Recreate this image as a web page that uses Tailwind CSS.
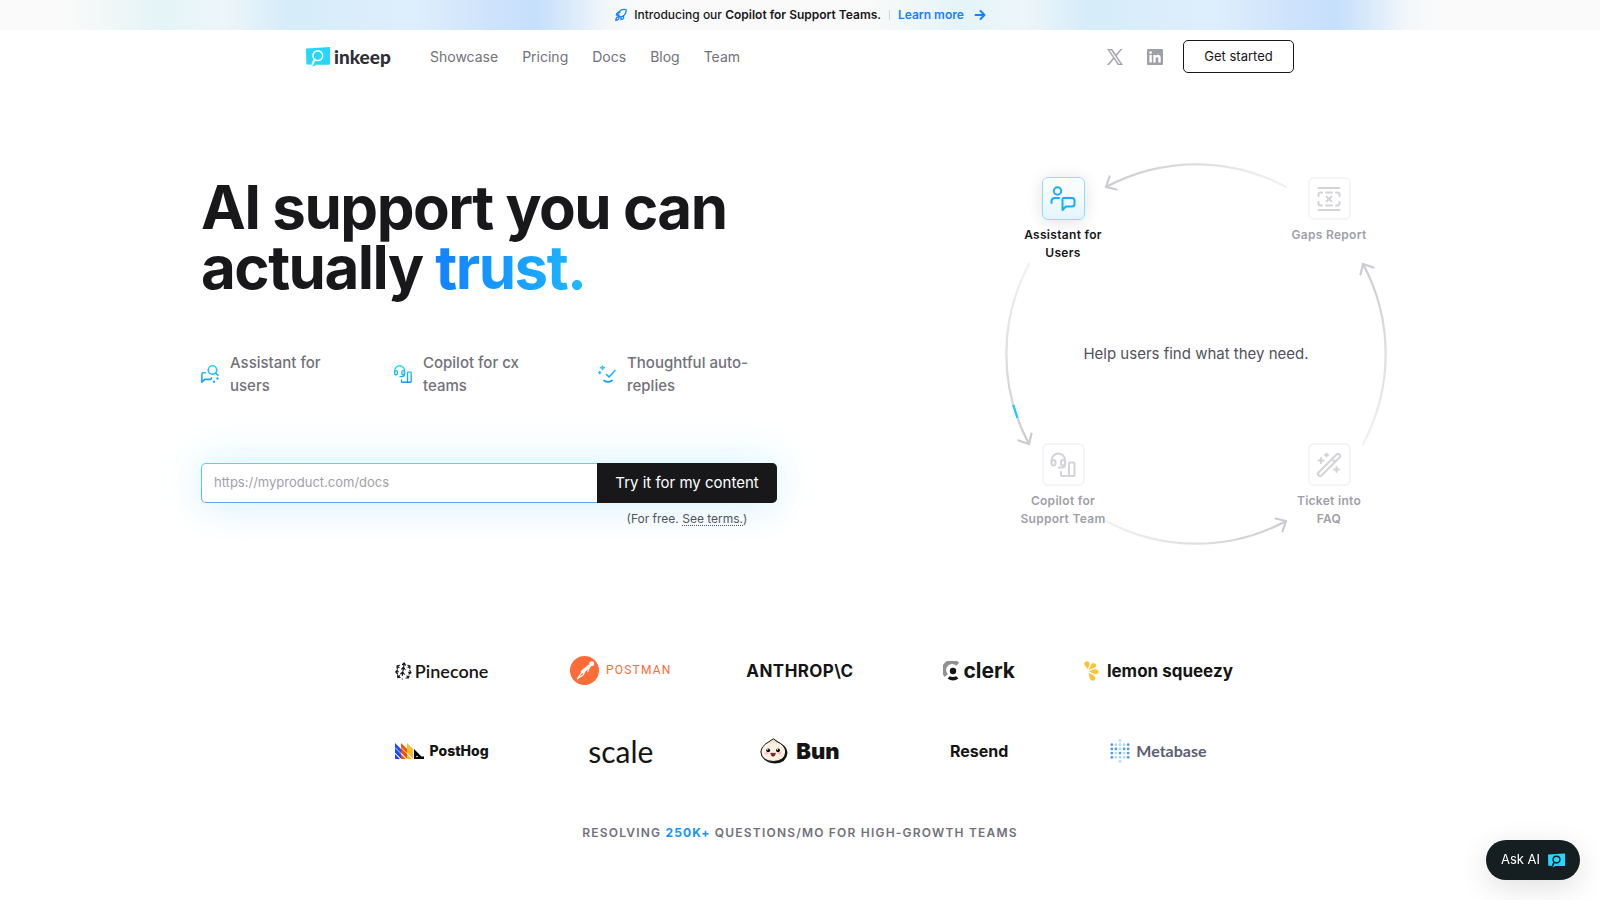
<!DOCTYPE html>
<html lang="en">
<head>
<meta charset="utf-8">
<meta name="viewport" content="width=device-width, initial-scale=1">
<title>Inkeep – AI support you can actually trust</title>
<script src="https://cdn.jsdelivr.net/npm/@tailwindcss/browser@4"></script>
</head>
<body class="min-h-screen bg-white font-['Inter',sans-serif] text-[#18181b] antialiased">

<!-- Announcement -->
<div class="flex h-[30px] items-center justify-center bg-[#fafafa] bg-[linear-gradient(90deg,#fafafa_0%,#fafafa_8%,#f0f7f7_14%,#e4f4f8_20%,#edf6f9_28%,#d6ecf9_36%,#d9edfa_42%,#deeefc_52%,#d0e4fb_60%,#c5dffc_67%,#d9e9fb_71%,#f3f7fb_76%,#fafafa_80%,#fafafa_100%)] bg-[length:50%_100%] text-xs leading-5">
  <svg class="mr-1.5 size-[14px] text-[#1481ff]" viewBox="0 0 24 24" fill="none" stroke="currentColor" stroke-width="2.200" stroke-linecap="round" stroke-linejoin="round" aria-hidden="true"><path d="M9 15l-3-3c.6-2 1.400-3.900 2.500-5.600A13 13 0 0 1 21 3c0 3-1 8-6 11.500A24 24 0 0 1 9 15z"/><path d="M9 12H4s.5-3 2-4c1.600-1.100 4 0 4 0M12 15v5s3-.5 4-2c1.100-1.600 0-5 0-5M5 16c-1.500 1.300-2 5-2 5s3.700-.5 5-2c.7-.8.7-2.100-.1-2.900A2.200 2.200 0 0 0 5 16z"/></svg>
  <p class="font-medium">Introducing our <strong class="font-semibold">Copilot for Support Teams</strong>.</p>
  <span class="mx-2 h-2.5 w-px bg-zinc-300"></span>
  <a href="#" class="flex items-center gap-2.5 font-semibold text-[#1481ff]">Learn more
    <svg class="size-3" viewBox="0 0 12 12" fill="none" stroke="currentColor" stroke-width="2" stroke-linecap="round" stroke-linejoin="round" aria-hidden="true"><path d="M1.500 6h9M6.500 2L10.500 6l-4 4"/></svg>
  </a>
</div>

<!-- Header -->
<header class="mx-auto flex max-w-[1024px] items-center px-[18px] py-2.5">
  <a href="#" class="flex w-[84px] items-center gap-1" aria-label="inkeep">
    <svg class="h-5 w-6 shrink-0" viewBox="0 0 24 20" aria-hidden="true"><path d="M.5 1.500L23.500 0Q24 0 24 .5V17q0 .7-.7.700H10.500L6.500 20l.5-2.300L1 17.500Q.5 17.500.4 17L0 2Q0 1.500.5 1.500z" fill="#26d6ff"/><circle cx="11.800" cy="8.700" r="4.800" fill="none" stroke="#fff" stroke-width="1.600"/><path d="M8.500 12.500l-1.800 4.500" stroke="#fff" stroke-width="2.200" stroke-linecap="round"/></svg>
    <span class="font-['Lato',sans-serif] text-[19px] leading-6 font-black text-[#2f2f33]">inkeep</span>
  </a>
  <nav class="ml-10 flex items-center gap-6 text-sm leading-6 text-zinc-500">
    <a href="#">Showcase</a><a href="#">Pricing</a><a href="#">Docs</a><a href="#">Blog</a><a href="#">Team</a>
  </nav>
  <div class="ml-auto flex items-center gap-6 text-zinc-400">
    <a href="#" aria-label="X"><svg class="size-4" viewBox="0 0 24 24" fill="currentColor" stroke="currentColor" stroke-width=".7"><path d="M14.200 10.200L22.700 0h-2l-7.400 8.800L7.400 0H.6l8.900 13.300L.6 24h2l7.800-9.300L16.600 24h6.800zM11.400 13.500l-.9-1.300L3.300 1.600h3.100l5.800 8.500.9 1.300 7.600 11.100h-3.100z"/></svg></a>
    <a href="#" aria-label="LinkedIn"><svg class="size-4" viewBox="0 0 16 16" fill="currentColor"><path fill-rule="evenodd" d="M1 0h14a1 1 0 0 1 1 1v14a1 1 0 0 1-1 1H1a1 1 0 0 1-1-1V1a1 1 0 0 1 1-1zM2.400 6v7.600h2.400V6zM3.600 2.200a1.400 1.400 0 1 0 0 2.800 1.400 1.400 0 0 0 0-2.800zM6.300 6v7.600h2.400V9.800c0-1 .4-1.800 1.400-1.800s1.200.8 1.200 1.900v3.700h2.400V9.300c0-2-.6-3.500-2.900-3.500-1.100 0-1.800.6-2.200 1.200V6z"/></svg></a>
  </div>
  <button class="ml-5 h-[33px] w-[111px] rounded-[5px] border border-zinc-900 text-[13px] leading-none text-zinc-900">Get started</button>
</header>

<main>
<!-- Hero -->
<section class="mx-auto flex max-w-[1200px] items-center justify-between gap-10 px-px pt-[68px]">
  <div class="w-[576px]">
    <h1 class="text-[60px] leading-[60px] font-bold tracking-tight">AI support you can<br>actually <span class="bg-gradient-to-r from-[#1481ff] to-[#22b8ff] bg-clip-text text-transparent">trust.</span></h1>

    <ul class="mt-[54px] grid grid-cols-[193px_204px_1fr] text-[15px] leading-[23px] font-medium text-zinc-500">
      <li class="flex items-center gap-[11px]">
        <svg class="size-[18px] shrink-0" viewBox="0 0 18 18" fill="none" stroke="url(#cyan)" stroke-width="1.600" stroke-linecap="round" stroke-linejoin="round" aria-hidden="true"><defs><linearGradient id="cyan" gradientUnits="userSpaceOnUse" x1="0" y1="0" x2="0" y2="18"><stop stop-color="#26d6ff"/><stop offset="1" stop-color="#1498ff"/></linearGradient></defs><circle cx="11.500" cy="5" r="4.200"/><path d="M14.500 8l2.500 2.300M4.500 7.800H2Q.9 7.800.9 9v8.200l2.800-2.800H9q1.500 0 1.500-1.500"/><path d="M13 16.200v1M16.500 13v1M16 13.500h1M12.500 16.700h1"/></svg>
        <span class="max-w-[125px]">Assistant for users</span></li>
      <li class="flex items-center gap-[11px]">
        <svg class="size-[18px] shrink-0" viewBox="0 0 24 24" fill="none" stroke="url(#cyan2)" stroke-width="1.800" stroke-linecap="round" stroke-linejoin="round" aria-hidden="true"><defs><linearGradient id="cyan2" gradientUnits="userSpaceOnUse" x1="0" y1="0" x2="0" y2="24"><stop stop-color="#26d6ff"/><stop offset="1" stop-color="#1498ff"/></linearGradient></defs><path d="M1 9V7.500a6.500 6.500 0 0 1 13 0V12q0 3-3 3.500H8"/><rect x="1" y="7.500" width="3.500" height="5.500" rx="1.500"/><rect x="10.500" y="7.500" width="3.500" height="5.500" rx="1.500"/><path d="M18 22V10.500q0-1 1-1h3q1 0 1 1V22q0 1-1 1H11q-1 0-1-1v-2"/></svg>
        <span class="max-w-[125px]">Copilot for cx teams</span></li>
      <li class="flex items-center gap-[11px]">
        <svg class="size-[18px] shrink-0" viewBox="0 0 18 18" fill="none" stroke="url(#cyan3)" stroke-width="1.700" stroke-linecap="round" stroke-linejoin="round" aria-hidden="true"><defs><linearGradient id="cyan3" gradientUnits="userSpaceOnUse" x1="0" y1="0" x2="0" y2="18"><stop stop-color="#26d6ff"/><stop offset="1" stop-color="#1498ff"/></linearGradient></defs><path d="M4.500 1v3.500M2.800 2.700h3.500M1.700 6.700v1.600M.9 7.500h1.600M8.500 9.500l2.500 2.500 6-6.500M6 15.500q4 2.800 8 0"/></svg>
        <span class="max-w-[125px]">Thoughtful auto-replies</span></li>
    </ul>

    <form class="mt-[66px] pb-[3px]">
      <div class="flex h-10 rounded-[5px] bg-gradient-to-b from-[#4fd8f8] to-[#5aa9fb] shadow-[0_-4px_44px_rgba(38,214,255,0.15),0_8px_36px_rgba(20,129,255,0.07)]">
        <input type="url" aria-label="Documentation URL" placeholder="https://myproduct.com/docs" class="my-px ml-px min-w-0 flex-1 rounded-l-[4px] bg-white px-3 text-[13px] outline-none placeholder:text-zinc-400">
        <button type="button" class="w-[180px] rounded-r-[5px] bg-[#18181b] text-[15px] leading-none whitespace-nowrap text-white">Try it for my content</button>
      </div>
      <p class="mt-1.5 ml-auto w-[180px] text-center text-xs leading-5 text-zinc-600">(For free. <a href="#" class="underline decoration-dotted underline-offset-2">See terms.</a>)</p>
    </form>
  </div>

  <!-- Feedback loop -->
  <div class="relative size-[406px] shrink-0">
    <svg class="absolute inset-0 size-full" viewBox="-203 -203 406 406" fill="none" stroke-width="2.200" stroke-linecap="round" stroke-linejoin="round" aria-hidden="true">
      <defs>
        <linearGradient id="fade" gradientUnits="userSpaceOnUse" x1="90" y1="0" x2="-90" y2="0"><stop stop-color="#f1f1f3"/><stop offset="1" stop-color="#cbcbd0"/></linearGradient>
        <g id="arc"><path d="M90 -167A190 190 0 0 0 -90 -167" stroke="url(#fade)"/><path d="M-86.500 -177.500L-90 -167L-79.500 -164.500" stroke="#cbcbd0"/></g>
      </defs>
      <use href="#arc"/>
      <use href="#arc" transform="rotate(-90)"/>
      <use href="#arc" transform="rotate(180)"/>
      <use href="#arc" transform="rotate(90)"/>
      <path d="M-182.800 51L-178.500 64" stroke="#12d0ff" stroke-linecap="butt"/>
    </svg>
    <p class="absolute inset-x-0 top-[191px] text-center text-[15px] leading-6 text-zinc-600">Help users find what they need.</p>

    <div class="absolute top-[26px] left-[20px] flex w-[100px] flex-col items-center gap-1.5 text-center text-xs leading-[18px] font-semibold tracking-wide text-zinc-900">
      <span class="flex size-[43px] items-center justify-center rounded-md border border-[#8fdcff] bg-gradient-to-b from-white to-[#e3f5ff] text-[#16adff] shadow-[0_2px_16px_rgba(0,0,0,0.12)]">
        <svg class="size-[26px]" viewBox="0 0 26 26" fill="none" stroke="currentColor" stroke-width="2" stroke-linecap="round" stroke-linejoin="round" aria-hidden="true"><circle cx="7.500" cy="5" r="3.700"/><path d="M1.500 17v-1.500q0-3.500 3.500-3.500h4M12.500 24V13q0-1 1-1H22q2.500 0 2.500 2.500V18q0 2.500-2.500 2.500h-6z"/></svg>
      </span>Assistant for Users
    </div>
    <div class="absolute top-[26px] right-[20px] flex w-[100px] flex-col items-center gap-1.5 text-center text-xs leading-[18px] font-semibold tracking-wide text-zinc-400">
      <span class="flex size-[43px] items-center justify-center rounded-md border-2 border-zinc-100 text-zinc-300">
        <svg class="size-[26px]" viewBox="0 0 26 26" fill="none" stroke="currentColor" stroke-width="2" stroke-linecap="round" stroke-linejoin="round" aria-hidden="true"><path d="M2.500 2h21M2.500 24h21M2.500 10V8.500q0-2 2-2H6M10 6.500h6M20 6.500h1.500q2 0 2 2V10M2.500 16v1.500q0 2 2 2H6M10 19.500h6M20 19.500h1.500q2 0 2-2V16M10.700 10.700l4.600 4.600M15.300 10.700l-4.600 4.600"/></svg>
      </span>Gaps Report
    </div>
    <div class="absolute top-[292px] left-[20px] flex w-[100px] flex-col items-center gap-1.5 text-center text-xs leading-[18px] font-semibold tracking-wide text-zinc-400">
      <span class="flex size-[43px] items-center justify-center rounded-md border-2 border-zinc-100 text-zinc-300">
        <svg class="size-[26px]" viewBox="0 0 26 26" fill="none" stroke="currentColor" stroke-width="2" stroke-linecap="round" stroke-linejoin="round" aria-hidden="true"><path d="M1.500 9.500V8.300a6.800 6.800 0 0 1 13.600 0V12q0 3.500-3.200 3.500H8.500"/><rect x="1.500" y="8" width="4" height="5.500" rx="2"/><rect x="11" y="8" width="4" height="5.500" rx="2"/><path d="M19 24V11.500q0-1 1-1h3.500q1 0 1 1V23q0 1-1 1H12q-1 0-1-1v-3"/></svg>
      </span>Copilot for Support Team
    </div>
    <div class="absolute top-[292px] right-[20px] flex w-[100px] flex-col items-center gap-1.5 px-2.5 text-center text-xs leading-[18px] font-semibold tracking-wide text-zinc-400">
      <span class="flex size-[43px] items-center justify-center rounded-md border-2 border-zinc-100 text-zinc-300">
        <svg class="size-[26px]" viewBox="0 0 26 26" fill="none" stroke="currentColor" stroke-width="2" stroke-linecap="round" stroke-linejoin="round" aria-hidden="true"><path d="M2.200 20.800L20.800 2.200q1-1 2 0l1 1q1 1 0 2L5.200 23.800q-1 1-2 0l-1-1q-1-1 0-2zM16 7l3 3M5 6v5M2.500 8.500h5M10.500 1.500v3M9 3h3M20.500 15v5M18 17.500h5"/></svg>
      </span>Ticket into FAQ
    </div>
  </div>
</section>

<!-- Customers -->
<section class="mx-auto mt-[93px] grid max-w-[896px] auto-rows-[40px] grid-cols-5 place-items-center gap-y-[41px] whitespace-nowrap text-[#151515]">
  <div class="flex items-center gap-[3px] pt-0.5 font-['Lato',sans-serif] text-[18px] leading-7 font-semibold">
    <svg class="h-[18px] w-[17px]" viewBox="0 0 34 36" fill="none" stroke="currentColor" stroke-width="2.400" stroke-linecap="round" stroke-linejoin="round" aria-hidden="true"><path d="M17.500 9L18.500 2M15 5l3.500-3L21 6M16 18l1-7M13.500 14l3.500-3.500 3 4.500M14.500 27l1-6M11.500 23.500l4-3.500 3 4.500M8 11L4 8M9 6.500L4 8l.5 5M26 11l4-3M25.500 6.500L30 8l-.5 5M7 19.500L1.500 20M5 16l-3.500 4L5 23.500M27 20.500l5 1M29.500 17l2.500 4.500-4 2.500M9 27.500L5.500 31M5.500 26v5h4.500M24 28l2.500 4M28 28l-1.500 4H22M14.500 34v.1"/></svg>Pinecone</div>
  <div class="flex items-center gap-[7px] font-['Roboto',sans-serif] text-xs tracking-widest text-[#ff6c37]">
    <svg class="size-[29px]" viewBox="0 0 28 28" aria-hidden="true"><circle cx="14" cy="14" r="14" fill="#ff6c37"/><g fill="none" stroke="#fff" stroke-linecap="round"><circle cx="21" cy="7.500" r="1.900" fill="#fff"/><path d="M18.500 9.800L12 15.300" stroke-width="3.200"/><path d="M12 15l-4.700 6.500M14 15l-1 3-5.700 4" stroke-width="1.200"/><path d="M18.800 11l-1.800 4.500" stroke-width="1"/></g></svg>POSTMAN</div>
  <div class="pt-0.5 text-[17px] leading-7 font-bold tracking-wide">ANTHROP\C</div>
  <div class="flex items-center gap-1 pt-0.5 text-[21px] leading-7 font-bold">
    <svg class="h-5 w-4" viewBox="0 0 16 20" aria-hidden="true"><path d="M14.700 3.200A7.800 7.800 0 0 0 3.300 14.500" fill="none" stroke="#919191" stroke-width="4.200"/><circle cx="10" cy="10" r="3.200" fill="currentColor"/><path d="M4.500 17.500l2.300-2.300q3.200 1.500 6.400 0l2.300 2.300q-5.500 4-11 0z" fill="currentColor"/></svg>clerk</div>
  <div class="flex items-center gap-2 pt-0.5 text-[17px] leading-7 font-bold">
    <svg class="h-5 w-[15px]" viewBox="0 0 15 20" fill="#ffc233" aria-hidden="true"><path d="M4 8.500L.5 4Q-.5 1 2.300.2 5.300-.2 5.500 2.500z"/><path d="M4.800 9L7 3.800Q8.500 1 11.300 2.700 13.300 5 10.500 6.600z"/><path d="M5 10.500L10 8.300Q14 7.500 14.500 10.800 14.300 14 10.500 13z"/><path d="M4.500 11.800L9.800 14.500Q12.500 17 10.700 19 8 21 5.800 17.500z"/></svg>lemon squeezy</div>

  <div class="flex items-center gap-1.5 text-[14px] leading-7 font-extrabold">
    <svg class="h-4 w-[29px]" viewBox="0 0 29 16" aria-hidden="true"><path d="M0 0l6 6v10L0 10z" fill="#1d4aff"/><path d="M0 11l5 5H0z" fill="#1d4aff"/><path d="M6 0l6 6v10L6 10z" fill="#f54e00"/><path d="M6 11l5 5H6z" fill="#f54e00"/><path d="M12 0l6 6v10l-6-6z" fill="#f9bd2b"/><path d="M12 11l5 5h-5z" fill="#f9bd2b"/><path d="M0 4.500l11.500 11.500M6 4.500l11.500 11.500M0 10l6 6" stroke="#fff" stroke-width=".8"/><path d="M19 6l7.500 7.500H29V16H19z"/><circle cx="22" cy="13.500" r=".8" fill="#fff"/></svg>PostHog</div>
  <div class="font-['Lato',sans-serif] text-[30px] leading-8">scale</div>
  <div class="flex items-center gap-2 text-[22px] leading-7 font-black">
    <svg class="h-[26px] w-7" viewBox="0 0 28 26" aria-hidden="true"><path d="M13.500 1Q17 3 21 5.500 27.500 9.500 27.500 15 26.500 25 15 25.500 5 25 1 17z" fill="#111"/><path d="M13.300.9Q15 1.800 17 3.500 25.500 7.500 25.700 14 25 23 13.500 23.500 1.500 23 .9 14 1.200 8 9 3.700 11.500 2 13.300.9z" fill="#fbf0df" stroke="#111" stroke-width="1"/><path d="M12.500 2.500q-.5 2-2.500 3M14 2.500v3M15 3q1.500 1 1.500 2.500" fill="none" stroke="#d8c3a5" stroke-width=".7"/><circle cx="8.200" cy="12.300" r="1.900"/><circle cx="18" cy="12.300" r="1.900"/><circle cx="7.700" cy="11.700" r=".6" fill="#fff"/><circle cx="17.500" cy="11.700" r=".6" fill="#fff"/><ellipse cx="6.800" cy="15.300" rx="1.900" ry="1.100" fill="#feb0c0"/><ellipse cx="19.500" cy="15.300" rx="1.900" ry="1.100" fill="#feb0c0"/><path d="M10.700 15.300h4.800q-.5 3-2.400 3t-2.400-3z" fill="#b71422" stroke="#111" stroke-width=".5"/></svg>Bun</div>
  <div class="text-[16px] leading-7 font-bold">Resend</div>
  <div class="flex items-center gap-1.5 font-['Lato',sans-serif] text-[16px] leading-7 font-bold text-[#5a6072]">
    <svg class="h-6 w-5" viewBox="0 0 20 24" fill="#509ee3" aria-hidden="true"><g opacity=".4"><circle cx="10" cy="1.600" r="1.400"/><circle cx="5.900" cy="5.700" r="1.400"/><circle cx="10" cy="5.700" r="1.400"/><circle cx="14.100" cy="5.700" r="1.400"/><circle cx="10" cy="9.900" r="1.400"/><circle cx="5.900" cy="14.100" r="1.400"/><circle cx="14.100" cy="14.100" r="1.400"/><circle cx="5.900" cy="18.300" r="1.400"/><circle cx="10" cy="18.300" r="1.400"/><circle cx="14.100" cy="18.300" r="1.400"/><circle cx="10" cy="22.400" r="1.400"/></g><circle cx="1.800" cy="5.700" r="1.400"/><circle cx="18.200" cy="5.700" r="1.400"/><circle cx="1.800" cy="9.900" r="1.400"/><circle cx="5.900" cy="9.900" r="1.400"/><circle cx="14.100" cy="9.900" r="1.400"/><circle cx="18.200" cy="9.900" r="1.400"/><circle cx="1.800" cy="14.100" r="1.400"/><circle cx="10" cy="14.100" r="1.400"/><circle cx="18.200" cy="14.100" r="1.400"/><circle cx="1.800" cy="18.300" r="1.400"/><circle cx="18.200" cy="18.300" r="1.400"/></svg>Metabase</div>
</section>

<p class="mt-[52px] text-center text-xs leading-5 font-semibold tracking-widest text-zinc-500 uppercase">Resolving <span class="font-bold text-[#1493ff]">250K+</span> questions/mo for high-growth teams</p>
</main>

<button class="fixed right-5 bottom-5 flex h-10 items-center gap-2 rounded-full bg-[#151e20] px-[15px] text-[13px] text-white shadow-[0_8px_30px_rgba(0,0,0,0.12)]">Ask AI
  <svg class="h-[15px] w-[17px]" viewBox="0 0 24 20" aria-hidden="true"><path d="M.5 1.500L23.500 0Q24 0 24 .5V17q0 .7-.7.700H10.500L6.500 20l.5-2.300L1 17.500Q.5 17.500.4 17L0 2Q0 1.500.5 1.500z" fill="#26d6ff"/><circle cx="12" cy="8.700" r="4.800" fill="none" stroke="#151e20" stroke-width="2"/><path d="M8.500 12.500l-2 5" stroke="#151e20" stroke-width="2.400"/></svg>
</button>
</body>
</html>
